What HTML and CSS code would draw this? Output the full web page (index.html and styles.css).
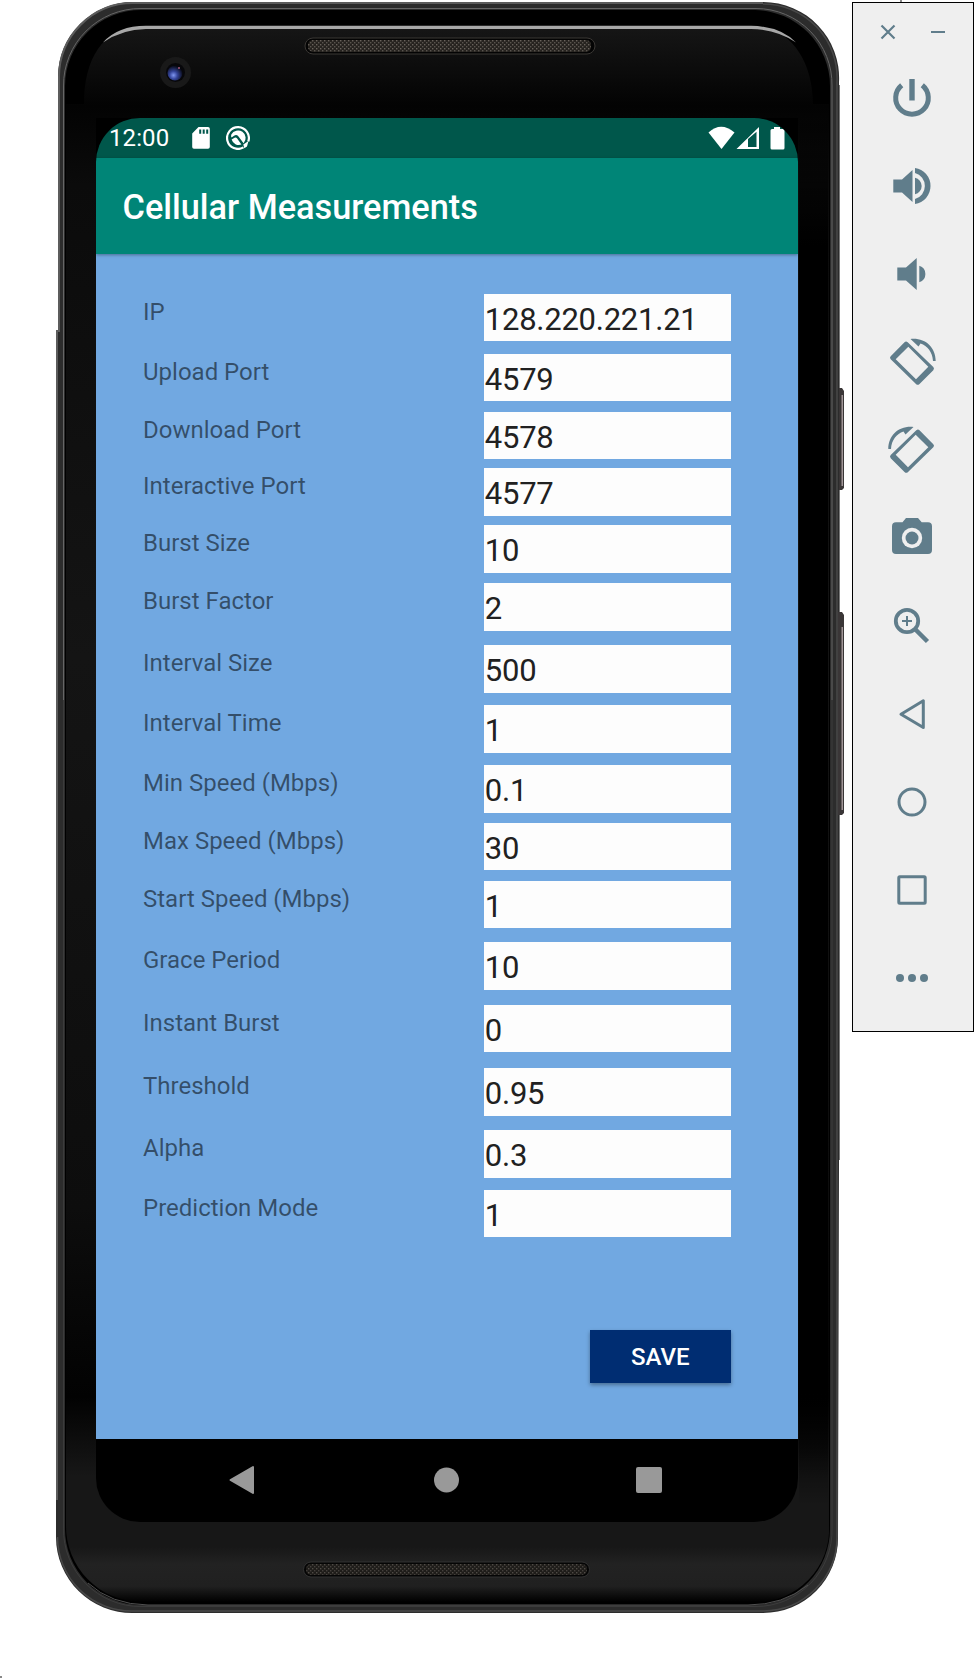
FILE: index.html
```html
<!DOCTYPE html>
<html lang="en">
<head>
<meta charset="utf-8">
<title>Cellular Measurements</title>
<link rel="stylesheet" href="styles.css">
</head>
<body>
<span class="tick tick-top"></span>
<span class="tick tick-bottom"></span>
<main class="stage">
  <section class="phone">
    <svg class="chassis" viewBox="0 0 796 1620" aria-hidden="true">
      <defs>
        <linearGradient id="face" x1="0" y1="0" x2="0" y2="1">
          <stop offset="0" stop-color="#161616"/><stop offset=".05" stop-color="#030303"/>
          <stop offset=".1" stop-color="#0b0b0b"/><stop offset=".4" stop-color="#141414"/>
          <stop offset=".75" stop-color="#0d0d0d"/><stop offset=".87" stop-color="#020202"/>
          <stop offset=".92" stop-color="#171717"/><stop offset=".965" stop-color="#171717"/>
          <stop offset=".976" stop-color="#222"/><stop offset=".99" stop-color="#202020"/><stop offset="1" stop-color="#000"/>
        </linearGradient>
        <linearGradient id="side" x1="0" y1="0" x2="0" y2="1">
          <stop offset="0" stop-color="#000" stop-opacity="0"/><stop offset=".1" stop-color="#000"/>
          <stop offset=".92" stop-color="#000"/><stop offset="1" stop-color="#000" stop-opacity="0"/>
        </linearGradient>
        <pattern id="mesh" width="4" height="4" patternUnits="userSpaceOnUse">
          <rect width="4" height="4" fill="#26231f"/><rect width="1.4" height="1.4" fill="#68625b"/><rect x="2" y="2" width="1.4" height="1.4" fill="#59544e"/>
        </pattern>
        <radialGradient id="lens" cx=".4" cy=".65" r=".65"><stop offset="0" stop-color="#7f96f0"/><stop offset=".4" stop-color="#35459a"/><stop offset="1" stop-color="#05060d"/></radialGradient>
      </defs>
      <path fill="#777" d="M780 85h4v1075h-4z"/>
      <path fill="#2c2c2c" d="M2 77A75 75 0 0 1 77 2H707A76 76 0 0 1 783 82V1160L782 1537A75 75 0 0 1 707 1613H77A76 76 0 0 1 0 1537V331H2z"/>
      <path fill="none" stroke="#5c5c5c" stroke-width="2" d="M1 1500V331H3V77A74 74 0 0 1 77 3H707"/>
      <path fill="none" stroke="#484848" stroke-width="1.500" d="M707 4A74 74 0 0 1 781 82V1537A74 74 0 0 1 707 1611H77A74 74 0 0 1 1.500 1537"/>
      <path fill="none" stroke="#666" stroke-width="1" d="M7.500 700V86A77 77 0 0 1 85 8.500H700A76 76 0 0 1 776 86V700"/>
      <path fill="none" stroke="#3c3c3c" stroke-width="1" d="M7.500 700V1528A77 77 0 0 0 85 1606.500H700A76 76 0 0 0 776 1528V700"/>
      <path fill="#000" d="M9 86A76 76 0 0 1 86 10H699A76 76 0 0 1 774 86V1528A76 76 0 0 1 699 1605H85A76 76 0 0 1 9 1528z"/>
      <path fill="url(#face)" d="M10 104H28C28 60 46 27 86 27H699C735 27 757 62 757 104H773V1525A73 73 0 0 1 699 1602H85A76 76 0 0 1 10 1525z"/>
      <rect x="743" y="105" width="29" height="1400" fill="url(#side)"/>
      <path fill="#a8a8a8" d="M47 42.500Q62 25.800 90 25.800H695Q724 26.300 740 42.500Q720 29.200 695 29H90Q66 29.200 47 42.500z"/>
      <path fill="none" stroke="#505050" d="M32 1583Q55 1604.500 92 1605H692Q727 1605 752 1585"/>
      <rect x="249" y="38" width="290" height="16" rx="8" fill="#040404" stroke="#3b3835"/>
      <rect x="252" y="40" width="283" height="12" rx="5" fill="url(#mesh)"/>
      <rect x="247.500" y="1562" width="286" height="15" rx="7.500" fill="#050505" stroke="#333"/>
      <rect x="250" y="1564" width="281" height="11" rx="5" fill="url(#mesh)" opacity=".75"/>
      <circle cx="119.500" cy="72.500" r="15.500" fill="#191919"/><circle cx="119.500" cy="72.500" r="9.500" fill="#07070a"/>
      <circle cx="119" cy="73" r="7.500" fill="url(#lens)"/><circle cx="123" cy="68" r="1" fill="#a45a78"/>
      <path fill="#3a3637" d="M783 388h3l2 3v97l-2 2h-3zM782 612h4l2 3v198l-2 2h-4z"/>
      <path fill="#a19698" d="M785.500 395h1.500v91h-1.500zM785.500 627h1.500v183h-1.500z"/>
      <path fill="#000" d="M40 118H120V160H40zM670 118H742V160H670z"/>
    </svg>
    <div class="screen">
      <header class="status">
        <span class="clock">12:00</span>
        <svg class="sd" viewBox="0 0 18 22"><path fill="#fff" d="M6.500 0H16a1.800 1.800 0 0 1 1.800 1.800V20a1.800 1.800 0 0 1-1.800 1.800H2A1.800 1.800 0 0 1 .2 20V6.500z"/><path fill="#00574b" d="M7.200 2.500h2v4.300h-2zM10.700 2.500h2v4.300h-2zM14.200 2.500h2v4.300h-2z"/></svg>
        <svg class="debug" viewBox="0 0 24 24"><path fill="none" stroke="#fff" stroke-width="2.200" d="M17.500 21.400A10.900 10.900 0 1 1 22.300 15.500"/><path fill="#fff" d="M5.300 8.500A7.600 7.600 0 1 1 17.600 17.200L12.300 10.300Q10.500 8 8 9.700L5.600 11.500Q4.600 10.500 5.300 8.500zM5.600 13.600 8.600 11.700Q10 11 11 12.300L15.400 18.600A7.600 7.600 0 0 1 5.600 13.600zM17.300 18.500 22.500 15 21 20.500 18.300 22.300z"/></svg>
        <svg class="signals" viewBox="0 0 78 24"><path fill="#fff" d="M.5 6.500Q13-5 26.500 6.500L13.500 23z"/><path fill="#fff" fill-rule="evenodd" d="M28.500 23 51 1V23zM40 13v8h8.500V5.800z"/><path fill="#fff" d="M66 1h6v2h3a1.500 1.500 0 0 1 1.500 1.500V22a1.500 1.500 0 0 1-1.500 1.500H64a1.500 1.500 0 0 1-1.500-1.500V4.500A1.500 1.500 0 0 1 64 3h2z"/></svg>
      </header>
      <h1 class="appbar">Cellular Measurements</h1>
      <div class="content">
        <div class="form">
          <span class="label">IP</span><span class="field">128.220.221.21</span>
          <span class="label">Upload Port</span><span class="field">4579</span>
          <span class="label">Download Port</span><span class="field">4578</span>
          <span class="label">Interactive Port</span><span class="field">4577</span>
          <span class="label">Burst Size</span><span class="field">10</span>
          <span class="label">Burst Factor</span><span class="field">2</span>
          <span class="label">Interval Size</span><span class="field">500</span>
          <span class="label">Interval Time</span><span class="field">1</span>
          <span class="label">Min Speed (Mbps)</span><span class="field">0.1</span>
          <span class="label">Max Speed (Mbps)</span><span class="field">30</span>
          <span class="label">Start Speed (Mbps)</span><span class="field">1</span>
          <span class="label">Grace Period</span><span class="field">10</span>
          <span class="label">Instant Burst</span><span class="field">0</span>
          <span class="label">Threshold</span><span class="field">0.95</span>
          <span class="label">Alpha</span><span class="field">0.3</span>
          <span class="label">Prediction Mode</span><span class="field">1</span>
        </div>
        <button class="save">SAVE</button>
      </div>
      <nav class="nav">
        <svg viewBox="0 0 28 30"><path fill="#999" stroke="#999" stroke-width="2" stroke-linejoin="round" d="M2.500 15 25 2V28z"/></svg>
        <svg viewBox="0 0 28 30"><circle cx="14.500" cy="15" r="12.500" fill="#999"/></svg>
        <svg viewBox="0 0 28 30"><rect x="1" y="2" width="26" height="26" rx="2" fill="#999"/></svg>
      </nav>
    </div>
  </section>
  <aside class="tools">
    <div class="window">
      <svg viewBox="0 0 16 16"><path d="M1.500 1.500 14.500 14.500M14.500 1.500 1.500 14.500" fill="none" stroke="#607d8b" stroke-width="2.200"/></svg>
      <svg viewBox="0 0 16 16"><path d="M1 8H15" stroke="#607d8b" stroke-width="2"/></svg>
    </div>
    <div class="tool"><svg viewBox="0 0 48 48"><path class="line" stroke-width="5" d="M13.700 11.300A16.300 16.300 0 1 0 34.300 11.300"/><path d="M21.300 5h5.400v21.500h-5.400z"/></svg></div>
    <div class="tool"><svg viewBox="0 0 48 48"><path d="M5.300 17.500H14L24.500 8V40L14 30.500H5.300zM27 15.700A8.500 8.500 0 0 1 27 32.300zM27 6A18.200 18.200 0 0 1 27 42V37A13.500 13.500 0 0 0 27 11z"/></svg></div>
    <div class="tool"><svg viewBox="0 0 48 48"><path d="M9.300 17.500H18L28.700 8V40L18 30.500H9.300zM31.300 15.700A8.700 8.700 0 0 1 31.300 32.300z"/></svg></div>
    <div class="tool"><svg viewBox="0 0 48 48"><path fill-rule="evenodd" d="M2.700 18.300 16.500 4.200Q18 2.700 19.700 4.200L45.300 29Q46.700 30.500 45.300 32.200L31.500 46Q29.700 47.700 28 46L2.700 21.300Q1.200 19.700 2.700 18.300zM7.700 21.300 28 41.300 40.300 28.700 20.300 8.700z"/><path d="M22.500 1C37-.5 47.500 9 47.700 23H45C44.500 14 39.500 8 32.500 5.500L30.500 8.500z"/></svg></div>
    <div class="tool"><svg viewBox="0 0 48 48"><g transform="translate(48 0) scale(-1 1)"><path fill-rule="evenodd" d="M2.700 18.300 16.500 4.200Q18 2.700 19.700 4.200L45.300 29Q46.700 30.500 45.300 32.200L31.500 46Q29.700 47.700 28 46L2.700 21.300Q1.200 19.700 2.700 18.300zM7.700 21.300 28 41.300 40.300 28.700 20.300 8.700z"/><path d="M22.500 1C37-.5 47.500 9 47.700 23H45C44.500 14 39.500 8 32.500 5.500L30.500 8.500z"/></g></svg></div>
    <div class="tool"><svg viewBox="0 0 48 48"><path d="M8 8.200H14.500L18 4H30L33.700 8.200H40a4 4 0 0 1 4 4V36a4 4 0 0 1-4 4H8a4 4 0 0 1-4-4V12.200a4 4 0 0 1 4-4z"/><circle class="hole" cx="24" cy="24" r="10.200"/><circle cx="24" cy="24" r="6.500"/></svg></div>
    <div class="tool"><svg viewBox="0 0 48 48"><circle class="line" stroke-width="3.800" cx="19" cy="19" r="11.200"/><path class="line" stroke-width="2" d="M14 19H24M19 14V24"/><path class="line" stroke-width="4.500" d="M27.500 27.500 39.500 39.500"/></svg></div>
    <div class="tool"><svg viewBox="0 0 48 48"><path class="line" stroke-width="3" stroke-linejoin="round" d="M13 24.200 35.300 10.800V37.500z"/></svg></div>
    <div class="tool"><svg viewBox="0 0 48 48"><circle class="line" stroke-width="3" cx="24" cy="24" r="13"/></svg></div>
    <div class="tool"><svg viewBox="0 0 48 48"><rect class="line" stroke-width="3" x="10.800" y="10.800" width="26.400" height="26.400" rx="1"/></svg></div>
    <div class="tool"><svg viewBox="0 0 48 48"><circle cx="12" cy="24" r="4"/><circle cx="24" cy="24" r="4"/><circle cx="36" cy="24" r="4"/></svg></div>
  </aside>
</main>
</body>
</html>
```

FILE: styles.css
```css
* { box-sizing: border-box; }
body { margin: 0; background: #fff; font-family: Roboto, sans-serif; }
svg { display: block; }
.stage {
  display: flex;
  align-items: flex-start;
  justify-content: space-between;
  width: 974px;
  height: 1678px;
  padding: 0 0 0 56px;
  overflow: hidden;
}
.tick { position: absolute; width: 2px; height: 2px; background: #888; }
.tick-top { left: 900px; top: 0; }
.tick-bottom { left: 0; top: 1676px; }

.phone { position: relative; width: 789px; height: 1620px; padding: 118px 47px 0 40px; }
.chassis { position: absolute; left: 0; top: 0; width: 796px; height: 1620px; }
.screen {
  position: relative;
  display: flex;
  flex-direction: column;
  width: 702px;
  height: 1404px;
  overflow: hidden;
  border-radius: 44px;
  background: #000;
}
.status {
  display: flex;
  align-items: center;
  height: 40px;
  padding: 0 12px 0 13px;
  background: #00574b;
  color: #fff;
}
.clock { width: 82.500px; font-size: 24px; line-height: 41px; letter-spacing: .1px; }
.sd { width: 18px; height: 22px; margin-right: 16.500px; }
.debug { width: 24px; height: 24px; }
.signals { width: 78px; height: 24px; margin-left: auto; }
.appbar {
  position: relative;
  flex: none;
  height: 95.500px;
  margin: 0;
  padding-left: 26.500px;
  background: #008577;
  box-shadow: 0 1px 3px rgba(0, 0, 0, .35);
  color: #fff;
  font-size: 34.300px;
  font-weight: 500;
  line-height: 98px;
}
.content {
  display: flex;
  flex-direction: column;
  align-items: flex-end;
  height: 1185.500px;
  padding: 40px 67.300px 0 47px;
  background: #71a8e1;
}
.form {
  display: grid;
  grid-template-columns: 341.300px 246.400px;
  grid-template-rows: 60px 58.300px 56.700px 57px 58px 61.400px 60.400px 60.100px 57.400px 57.800px 61.700px 62.500px 63.600px 62.100px 59.300px 48px;
  align-items: start;
}
.label { padding-top: 4px; color: rgba(0, 0, 0, .54); font-size: 24px; line-height: 28px; white-space: nowrap; }
.field { height: 47.700px; padding: 2px 0 0 .5px; background: #fdfdfd; color: #212121; font-size: 31px; line-height: 47px; letter-spacing: -.25px; }
.save {
  width: 141px;
  height: 53px;
  margin-top: 92.500px;
  padding: 0;
  border: 0;
  background: #002d72;
  box-shadow: 0 2px 4px rgba(0, 0, 0, .35);
  color: #fff;
  font: 500 24px/54px Roboto, sans-serif;
}
.nav { display: flex; justify-content: space-between; align-items: center; height: 82px; padding: 0 135px 0 132px; }
.nav svg { width: 28px; height: 30px; }

.tools { width: 122px; height: 1030px; margin-top: 2px; border: 1px solid #000; background: #efefef; }
.window { display: flex; justify-content: space-between; height: 51px; padding: 21px 27px 0; }
.window svg { width: 16px; height: 16px; }
.tool { display: flex; align-items: center; justify-content: center; height: 88px; padding-right: 2px; }
.tool svg { width: 48px; height: 48px; overflow: visible; fill: #607d8b; }
.tool .line { fill: none; stroke: #607d8b; }
.tool .hole { fill: #efefef; }
```
